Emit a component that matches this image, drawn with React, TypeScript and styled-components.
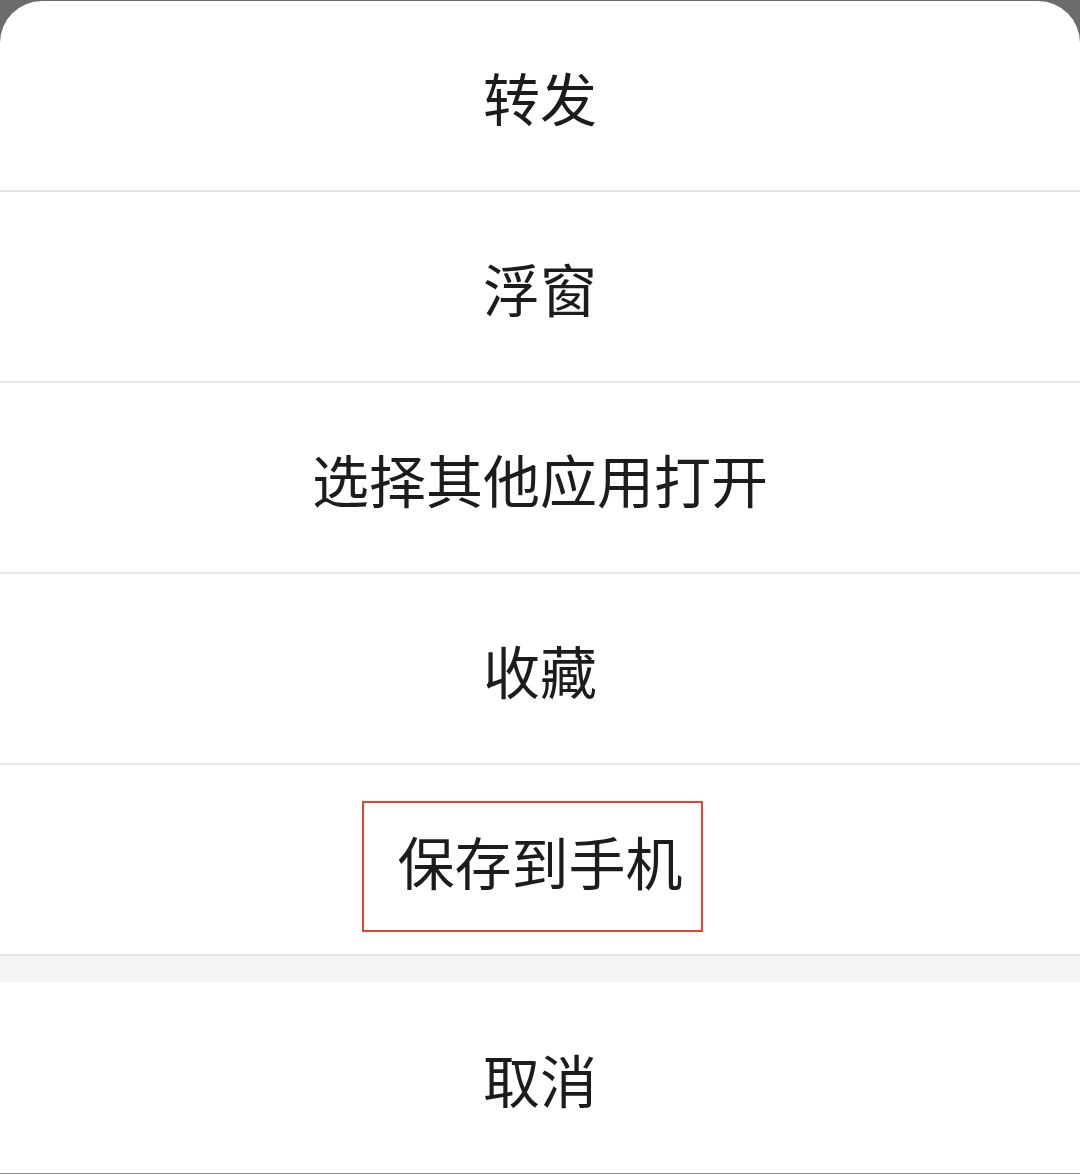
import React from "react";
import styled, { createGlobalStyle } from "styled-components";

const GlobalStyle = createGlobalStyle`
  html, body {
    margin: 0;
    padding: 0;
    background: #6b6b6b;
  }
  body {
    font-family: "Noto Sans CJK SC", "Noto Sans", sans-serif;
  }
`;

const Page = styled.div`
  width: 1080px;
  height: 1174px;
  padding-top: 1px;
  box-sizing: border-box;
  display: flex;
  flex-direction: column;
`;

const Sheet = styled.div`
  flex: 1;
  background: #ffffff;
  border-radius: 42px 42px 0 0;
  overflow: hidden;
  display: flex;
  flex-direction: column;
  border-bottom: 1px solid #8a8a8a;
`;

const Row = styled.div<{ $last?: boolean }>`
  position: relative;
  height: 189px;
  flex-shrink: 0;
  display: flex;
  align-items: center;
  justify-content: center;
  border-bottom: ${(p) => (p.$last ? "none" : "2px solid #e6e6e6")};
  font-size: 57px;
  color: #1c1c1c;
  letter-spacing: 0;
`;

const Gap = styled.div`
  height: 26px;
  flex-shrink: 0;
  background: #f5f5f5;
  border-top: 2px solid #e6e6e6;
`;

const CancelRow = styled(Row)`
  flex: 1;
  height: auto;
`;

const Highlight = styled.div`
  position: absolute;
  left: 362px;
  top: 36px;
  width: 341px;
  height: 131px;
  box-sizing: border-box;
  border: 2px solid #e8412c;
  pointer-events: none;
`;

const actions = ["转发", "浮窗", "选择其他应用打开", "收藏", "保存到手机"];

const App = () => {
  return (
    <>
      <GlobalStyle />
      <Page>
        <Sheet>
          {actions.map((label, i) => (
            <Row key={label} $last={i === actions.length - 1}>
              {label}
              {label === "保存到手机" && <Highlight />}
            </Row>
          ))}
          <Gap />
          <CancelRow $last>取消</CancelRow>
        </Sheet>
      </Page>
    </>
  );
};

export default App;
